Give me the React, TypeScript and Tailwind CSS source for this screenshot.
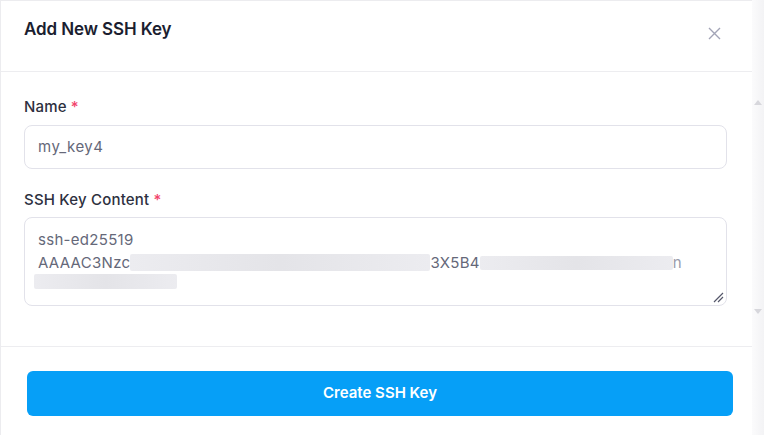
import React from 'react';

const Required: React.FC = () => <span className="ml-1 text-[#f2446c]">*</span>;

const Redacted: React.FC<{ w: string; h?: string }> = ({ w, h = 'h-[16px]' }) => (
  <span className={`inline-block align-middle ${w} ${h} rounded-[2px] bg-gradient-to-r from-[#ececf0] via-[#e4e4e8] to-[#ececf0] blur-[0.6px]`} />
);

const App: React.FC = () => {
  return (
    <div className="flex w-[764px] h-[435px] bg-white overflow-hidden font-['Inter',sans-serif]">
      <div className="flex flex-1 flex-col border-t border-l border-[#ececef]">
        {/* Header */}
        <div className="flex h-[71px] shrink-0 items-start justify-between border-b border-[#ededf0] pl-[23px] pr-[31px] pt-[16px]">
          <h2 className="text-[17px] font-semibold leading-6 tracking-[-0.1px] text-[#1b1e30]">Add New SSH Key</h2>
          <button className="mt-[10px] text-[#a2a4b6]">
            <svg width="13" height="13" viewBox="0 0 13 13" fill="none" stroke="currentColor" strokeWidth="1.4">
              <path d="M1 1 L12 12 M12 1 L1 12" />
            </svg>
          </button>
        </div>

        {/* Body */}
        <div className="flex h-[275px] shrink-0 flex-col border-b border-[#ededf0] pl-[23px] pr-[25px] pt-[25px]">
          <label className="text-[15px] font-medium leading-5 tracking-[0.2px] text-[#2d3040]">
            Name
            <Required />
          </label>
          <div className="mt-[8px] flex h-[44px] items-center rounded-[8px] border border-[#e2e2ea] px-[13px] text-[15px] tracking-[0.5px] text-[#656879]">
            my_key4
          </div>

          <label className="mt-[21px] text-[15px] font-medium leading-5 tracking-[0.2px] text-[#2d3040]">
            SSH Key Content
            <Required />
          </label>
          <div className="relative mt-[7px] h-[89px] rounded-[8px] border border-[#e2e2ea] px-[13px] pt-[10px] text-[15px] leading-[23px] tracking-[0.3px] text-[#656879]">
            <div>ssh-ed25519</div>
            <div className="flex items-center whitespace-nowrap">
              <span>AAAAC3Nzc</span>
              <Redacted w="w-[300px]" h="h-[17px]" />
              <span>3X5B4</span>
              <Redacted w="w-[193px]" h="h-[14px]" />
              <span className="text-[#9a9cab]">n</span>
            </div>
            <div className="-ml-[4px] flex items-center">
              <Redacted w="w-[143px]" h="h-[15px]" />
            </div>
            <svg className="absolute right-[2px] bottom-[2px]" width="11" height="11" viewBox="0 0 11 11" fill="none" stroke="#55576a" strokeWidth="1.2">
              <path d="M1 10 L10 1 M5 10 L10 5" />
            </svg>
          </div>
        </div>

        {/* Footer */}
        <div className="flex flex-1 items-start pl-[26px] pr-[19px] pt-[24px]">
          <button className="flex h-[45px] w-full items-center justify-center rounded-[6px] bg-[#069ff7] text-[15px] font-semibold text-white">
            Create SSH Key
          </button>
        </div>
      </div>

      {/* Scrollbar strip */}
      <div className="flex w-[12px] shrink-0 flex-col items-center bg-gradient-to-r from-[#fbfbfc] to-[#f3f3f5] pt-[100px]">
        <svg width="8" height="5" viewBox="0 0 8 5">
          <path d="M0 5 L4 0 L8 5 Z" fill="#d7d7dc" />
        </svg>
        <svg className="mt-[204px]" width="8" height="5" viewBox="0 0 8 5">
          <path d="M0 0 L8 0 L4 5 Z" fill="#d7d7dc" />
        </svg>
      </div>
    </div>
  );
};

export default App;
